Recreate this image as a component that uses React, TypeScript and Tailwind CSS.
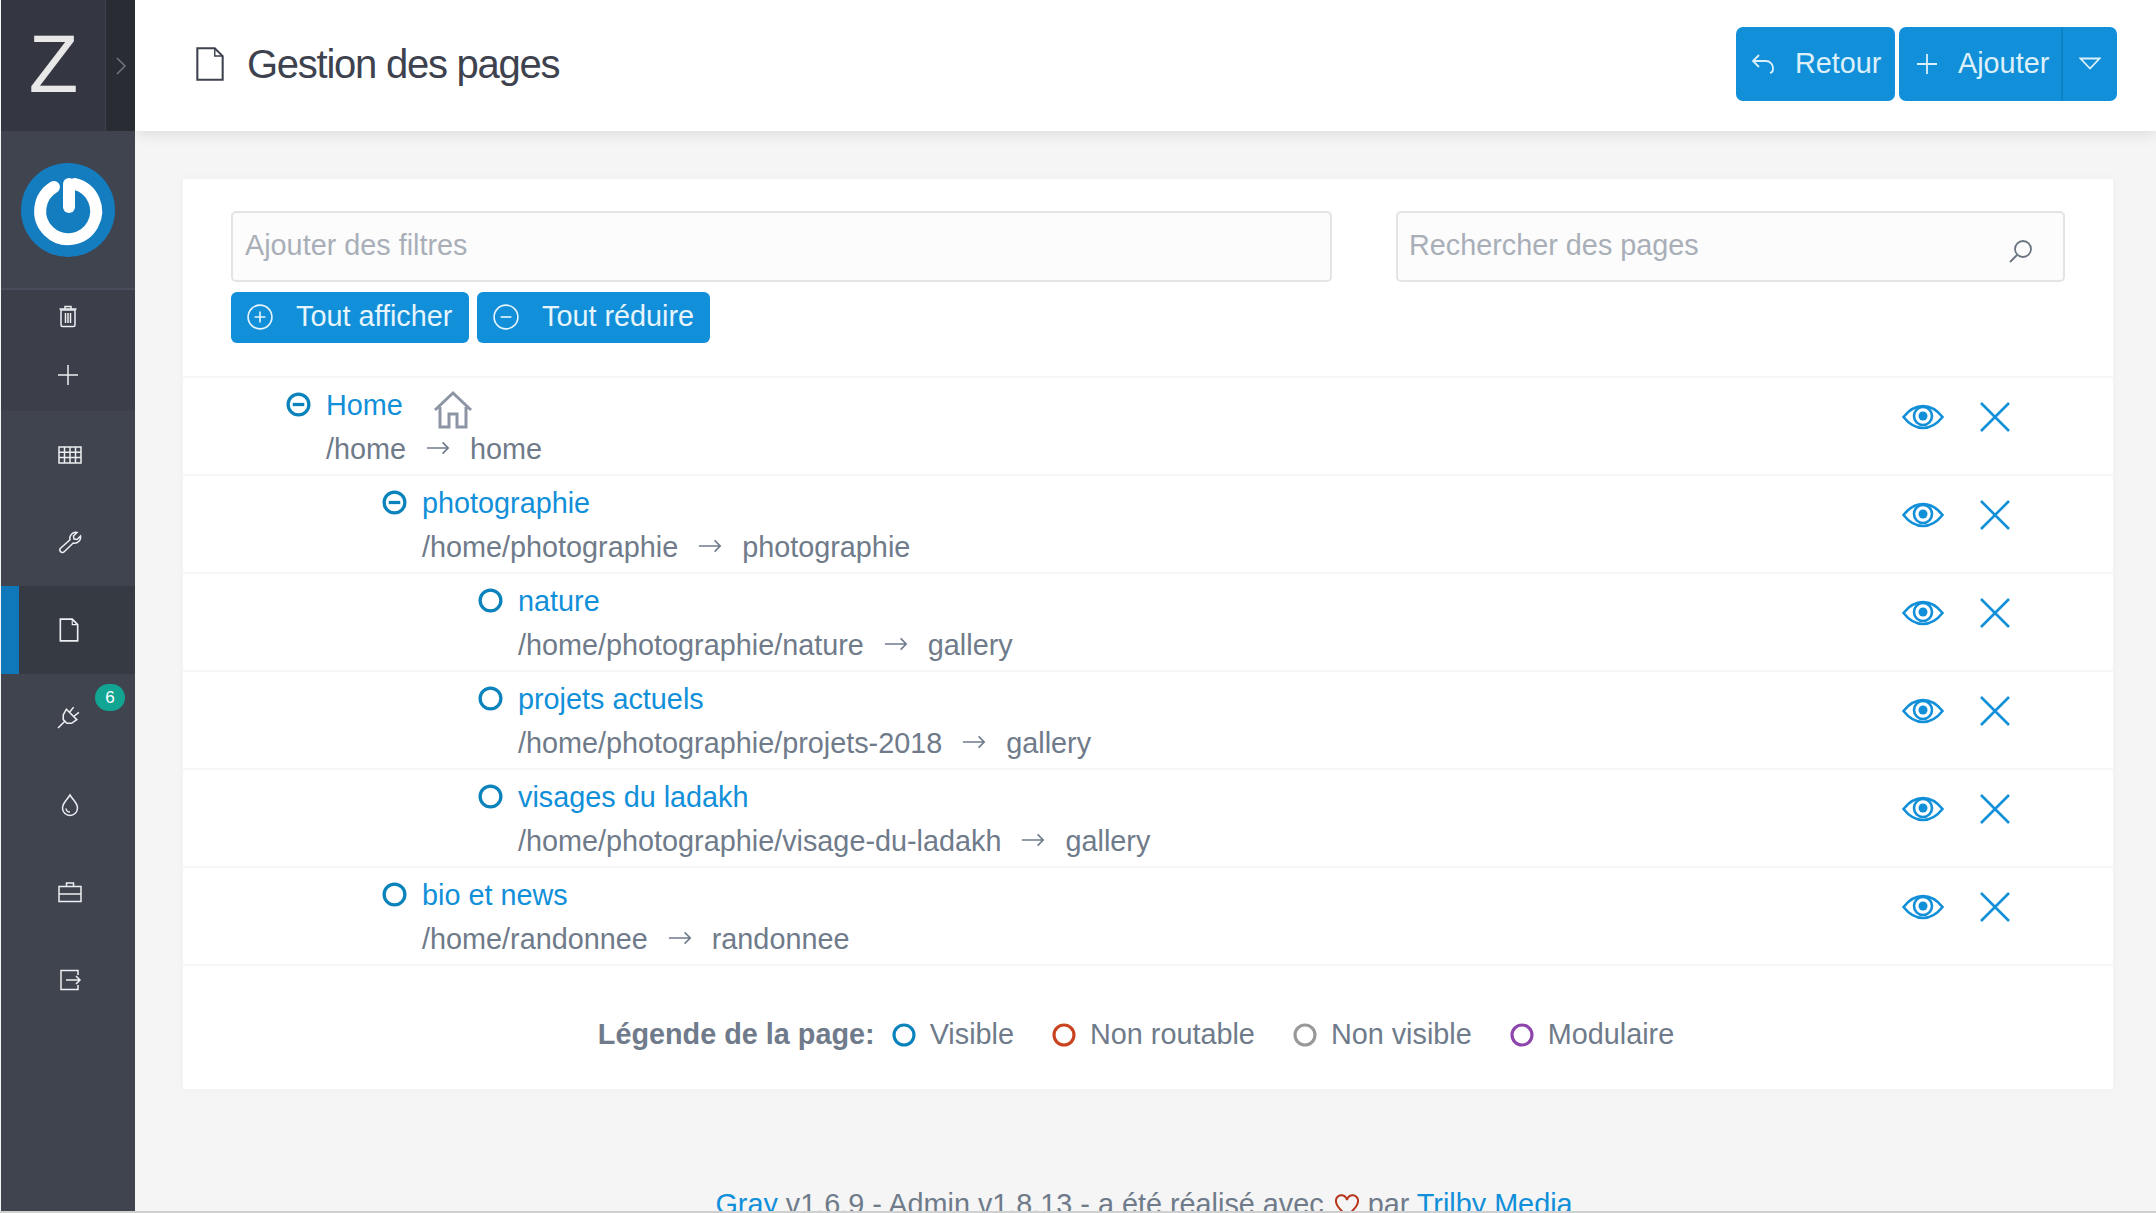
import React from "react";

function Svg({ s, vb = 24, className = "", children, sw = 1.5 }: { s: number; vb?: number; className?: string; children: React.ReactNode; sw?: number }) {
  return (
    <svg width={s} height={s} viewBox={`0 0 ${vb} ${vb}`} className={className} fill="none" stroke="currentColor" strokeWidth={sw}>
      {children}
    </svg>
  );
}

const PageIcon = ({ s = 24, sw = 1.5 }: { s?: number; sw?: number }) => (
  <Svg s={s} sw={sw}>
    <path d="M4 2h11l5 5v15H4z" />
    <path d="M15 2v5h5" strokeWidth={sw * 0.7} />
  </Svg>
);

function SideItem({ active, badge, children }: { active?: boolean; badge?: string; children: React.ReactNode }) {
  return (
    <div className={`relative h-[87.5px] flex items-center justify-center text-[#eceff1] ${active ? "bg-[#363a43] border-l-[18px] border-[#0f78bb]" : "pl-[3px]"}`}>
      <span className={active ? "-ml-[17px]" : ""}>{children}</span>
      {badge && (
        <span className="absolute left-[94px] top-[10px] w-[30px] h-[27px] rounded-full bg-[#12a594] text-white text-[17px] leading-[27px] text-center">{badge}</span>
      )}
    </div>
  );
}

function Sidebar() {
  return (
    <aside className="w-[134px] shrink-0 flex flex-col bg-[#40444f] ml-px">
      <div className="h-[131px] flex shrink-0">
        <div className="w-[105px] bg-[#343741] border-r border-[#40444f] flex items-center justify-center text-[#e8e8e8] text-[81px] font-light leading-none pb-[3px] pl-[1px]">Z</div>
        <div className="flex-1 bg-[#2a2c33] flex items-center justify-center text-[#777a80]">
          <svg width="12" height="18" viewBox="0 0 12 18" fill="none" stroke="currentColor" strokeWidth="1.4"><path d="M2 1l8 8-8 8" /></svg>
        </div>
      </div>
      <div className="h-[159px] flex items-center justify-center shrink-0 border-b-2 border-[#4a4c5c]">
        <div className="w-[94px] h-[94px] rounded-full bg-[#137dc0] flex items-center justify-center">
          <svg width="78" height="78" viewBox="0 0 78 78" fill="none" stroke="#ffffff" strokeWidth="12" strokeLinecap="round" className="blur-[0.6px]">
            <path d="M25 16a28 28 0 1 0 21-3" />
            <path d="M40 13v23" />
          </svg>
        </div>
      </div>
      <div className="h-[121px] bg-[#3c3e49] flex flex-col items-center justify-center gap-[35px] shrink-0 text-[#eceff1] pb-[10px]">
        <Svg s={24}>
          <path d="M5 6h14v15a1.500 1.500 0 0 1-1.500 1.500h-11A1.500 1.500 0 0 1 5 21z" />
          <path d="M3.500 5h17M9 5V2.500h6V5M9.500 9v10M12 9v10M14.500 9v10" />
        </Svg>
        <Svg s={24}><path d="M12 2v20M2 12h20" /></Svg>
      </div>
      <div className="flex flex-col">
        <SideItem>
          <Svg s={24}><path d="M1 4h22v16H1zM1 9.300h22M1 14.600h22M6.500 4v16M12 4v16M17.500 4v16" /></Svg>
        </SideItem>
        <SideItem>
          <Svg s={24}><path d="M2.500 21.500a2.300 2.300 0 0 1 0-3.200l9.500-8.500a6 6 0 0 1 7-7.300l-3.500 3.500.5 3 3 .5 3.500-3.500a6 6 0 0 1-7.300 7l-9 8.700a2.300 2.300 0 0 1-3.700-.2z" /></Svg>
        </SideItem>
        <SideItem active><PageIcon s={26} /></SideItem>
        <SideItem badge="6">
          <Svg s={25} className="-mt-[2px]">
            <path d="M1 23l6.500-6.500M9 5l10 10-5 3.500H9.500L6 15v-4.500zM12 8l4-5M16 12l5-4" />
          </Svg>
        </SideItem>
        <SideItem>
          <Svg s={24}><path d="M12 2c3 5 7.500 8 7.500 13a7.500 7.500 0 0 1-15 0C4.500 10 9 7 12 2z" /><path d="M8 15.500a4 4 0 0 0 4 3.500" /></Svg>
        </SideItem>
        <SideItem>
          <Svg s={24}><path d="M1 6.500h22v15H1zM1 14h22M8.500 6.500V3h7v3.500M11.500 14h1" /></Svg>
        </SideItem>
        <SideItem>
          <Svg s={24}><path d="M20 7V2.500H3v19h17V17M8 12h14M18 8l4 4-4 4" /></Svg>
        </SideItem>
      </div>
    </aside>
  );
}

function HeaderBtn({ icon, label, className = "" }: { icon: React.ReactNode; label: string; className?: string }) {
  return (
    <div className={`h-[74px] bg-[#118fd9] text-[#dcf0fb] flex items-center text-[28.8px] ${className}`}>
      {icon}
      <span>{label}</span>
    </div>
  );
}

function Circle({ color, minus, s = 25 }: { color: string; minus?: boolean; s?: number }) {
  return (
    <svg width={s} height={s} viewBox="0 0 26 26" fill="none" stroke={color} strokeWidth="3.400" className="shrink-0">
      <circle cx="13" cy="13" r="10.800" />
      {minus && <path d="M7 13h12" />}
    </svg>
  );
}

function Row({ level, name, path, tpl, open, home }: { level: number; name: string; path: string; tpl: string; open?: boolean; home?: boolean }) {
  const pl = ["pl-[102px]", "pl-[198px]", "pl-[294px]"][level];
  return (
    <div className={`h-[98px] border-t-2 border-[#f6f6f6] flex items-start ${pl} pr-[103px]`}>
      <div className="mt-[14px] ml-px"><Circle color="#0a82bc" minus={open} /></div>
      <div className="ml-[15px] flex-1 pt-[6px]">
        <div className="h-[44px] flex items-center text-[#118fd9] text-[28.8px]">
          <span>{name}</span>
          {home && (
            <svg width="40" height="40" viewBox="0 0 40 40" fill="none" stroke="#8d95a5" strokeWidth="3" className="ml-[30px] mt-[8px]">
              <path d="M2 20L20 3l18 17M7 17v20h9V24h8v13h9V17" />
            </svg>
          )}
        </div>
        <div className="h-[44px] flex items-center text-[#6f7b8a] text-[28.8px]">
          <span>{path}</span>
          <svg width="24" height="16" viewBox="0 0 26 16" fill="none" stroke="currentColor" strokeWidth="1.800" className="mx-[20px] mb-[4px]"><path d="M1 8h23M18 2l6 6-6 6" /></svg>
          <span>{tpl}</span>
        </div>
      </div>
      <div className="h-[78px] flex items-center gap-[36px] text-[#118fd9]">
        <svg width="42" height="26" viewBox="0 0 42 26" fill="none" stroke="currentColor" strokeWidth="2.600">
          <path d="M1.500 13C7 6 13 2 21 2s14 4 19.500 11C35 20 29 24 21 24S7 20 1.500 13z" />
          <circle cx="21" cy="12" r="9" />
          <circle cx="21" cy="12" r="4.500" fill="currentColor" stroke="none" />
        </svg>
        <svg width="30" height="30" viewBox="0 0 30 30" fill="none" stroke="currentColor" strokeWidth="2.600"><path d="M1 1l28 28M29 1L1 29" /></svg>
      </div>
    </div>
  );
}

function Legend({ color, label }: { color: string; label: string }) {
  return (
    <span className="flex items-center gap-[14px]">
      <Circle color={color} s={24} />
      <span>{label}</span>
    </span>
  );
}

const rows = [
  { level: 0, name: "Home", path: "/home", tpl: "home", open: true, home: true },
  { level: 1, name: "photographie", path: "/home/photographie", tpl: "photographie", open: true },
  { level: 2, name: "nature", path: "/home/photographie/nature", tpl: "gallery" },
  { level: 2, name: "projets actuels", path: "/home/photographie/projets-2018", tpl: "gallery" },
  { level: 2, name: "visages du ladakh", path: "/home/photographie/visage-du-ladakh", tpl: "gallery" },
  { level: 1, name: "bio et news", path: "/home/randonnee", tpl: "randonnee" },
];

export default function App() {
  return (
    <div className="h-[1213px] overflow-hidden flex bg-[#f5f5f5] font-['Liberation_Sans',Arial,sans-serif] border-b-2 border-[#d0d0d0]">
      <Sidebar />
      <main className="flex-1 min-w-0 flex flex-col h-[1211px] overflow-hidden">
        <header className="h-[131px] shrink-0 bg-white shadow-[0_3px_14px_rgba(0,0,0,0.1)] flex items-center justify-between pl-[56px] pr-[39px] pb-[4px] relative">
          <div className="flex items-center text-[#3d424e]">
            <PageIcon s={38} sw={1.300} />
            <h1 className="ml-[18px] text-[40px] tracking-[-1.250px]">Gestion des pages</h1>
          </div>
          <div className="flex gap-[4px]">
            <HeaderBtn
              className="w-[159px] rounded-[7px] pl-[15px]"
              label="Retour"
              icon={
                <svg width="24" height="22" viewBox="0 0 24 22" fill="none" stroke="currentColor" strokeWidth="1.800" className="mr-[20px]">
                  <path d="M8 2L2 8l6 6M2 8h13a7 7 0 0 1 7 7v1a4 4 0 0 1-3 4" />
                </svg>
              }
            />
            <div className="flex">
              <HeaderBtn
                className="w-[164px] rounded-l-[7px] pl-[17px] border-r-2 border-[#0f82c6]"
                label="Ajouter"
                icon={
                  <svg width="22" height="22" viewBox="0 0 22 22" fill="none" stroke="currentColor" strokeWidth="1.800" className="mr-[20px]">
                    <path d="M11 1v20M1 11h20" />
                  </svg>
                }
              />
              <div className="w-[54px] h-[74px] bg-[#118fd9] rounded-r-[7px] flex items-center justify-center text-[#dcf0fb]">
                <svg width="22" height="13" viewBox="0 0 22 13" fill="none" stroke="currentColor" strokeWidth="1.800"><path d="M1.500 1.500h19L11 11.500z" /></svg>
              </div>
            </div>
          </div>
        </header>
        <div className="mt-[48px] ml-[48px] w-[1930px] h-[910px] shrink-0 bg-white shadow-[0_0_10px_rgba(0,0,0,0.03)]">
          <div className="pt-[32px] px-[48px]">
            <div className="flex justify-between">
              <div className="w-[1101px] h-[71px] rounded-[5px] border-2 border-[#e4e4e4] bg-[#fcfcfc] flex items-center pl-[12px] text-[28.8px] text-[#a9afb8] pb-[1px]">Ajouter des filtres</div>
              <div className="w-[669px] h-[71px] rounded-[5px] border-2 border-[#e4e4e4] bg-[#fcfcfc] flex items-center justify-between pl-[11px] pr-[30px] text-[28.8px] text-[#a9afb8] pb-[1px]">
                <span>Rechercher des pages</span>
                <svg width="24" height="24" viewBox="0 0 24 24" fill="none" stroke="#6a7480" strokeWidth="1.800" className="mt-[10px]"><circle cx="14" cy="10" r="8" /><path d="M8 16l-7 7" /></svg>
              </div>
            </div>
            <div className="mt-[10px] flex gap-[8px] text-[#e6f4fc] text-[28.8px]">
              <div className="w-[238px] h-[51px] rounded-[6px] bg-[#118fd9] flex items-center pl-[16px] pb-[2px]">
                <svg width="26" height="26" viewBox="0 0 24 24" fill="none" stroke="currentColor" strokeWidth="1.500" className="mr-[23px]"><circle cx="12" cy="12" r="11" /><path d="M12 7v10M7 12h10" /></svg>
                Tout afficher
              </div>
              <div className="w-[233px] h-[51px] rounded-[6px] bg-[#118fd9] flex items-center pl-[16px] pb-[2px]">
                <svg width="26" height="26" viewBox="0 0 24 24" fill="none" stroke="currentColor" strokeWidth="1.500" className="mr-[23px]"><circle cx="12" cy="12" r="11" /><path d="M7 12h10" /></svg>
                Tout réduire
              </div>
            </div>
          </div>
          <div className="mt-[33px] border-b-2 border-[#f6f6f6]">
            {rows.map((r) => <Row key={r.name} {...r} />)}
          </div>
          <div className="h-[122px] flex items-center justify-center gap-[38px] text-[28.8px] text-[#6f7b8a] pt-[16px] pr-[24px]">
            <span className="flex items-center gap-[17px]">
              <b className="font-bold">Légende de la page:</b>
              <Legend color="#0a82bc" label="Visible" />
            </span>
            <Legend color="#c9431f" label="Non routable" />
            <Legend color="#999999" label="Non visible" />
            <Legend color="#8e44ad" label="Modulaire" />
          </div>
        </div>
        <div className="mt-[93px] text-center text-[28.8px] leading-[44px] text-[#6f7b8a] pr-[3px]">
          <span className="text-[#118fd9]">Gray</span> v1.6.9 - Admin v1.8.13 - a été réalisé avec{" "}
          <svg width="26" height="24" viewBox="0 0 26 24" fill="none" stroke="#b5361c" strokeWidth="2" className="inline align-[-4px] ml-[2px]"><path d="M13 22C5 15 2 11 2 7.500A5.500 5.500 0 0 1 13 6a5.500 5.500 0 0 1 11 1.500C24 11 21 15 13 22z" /></svg>{" "}
          par <span className="text-[#118fd9]">Trilby Media</span>
        </div>
      </main>
    </div>
  );
}
